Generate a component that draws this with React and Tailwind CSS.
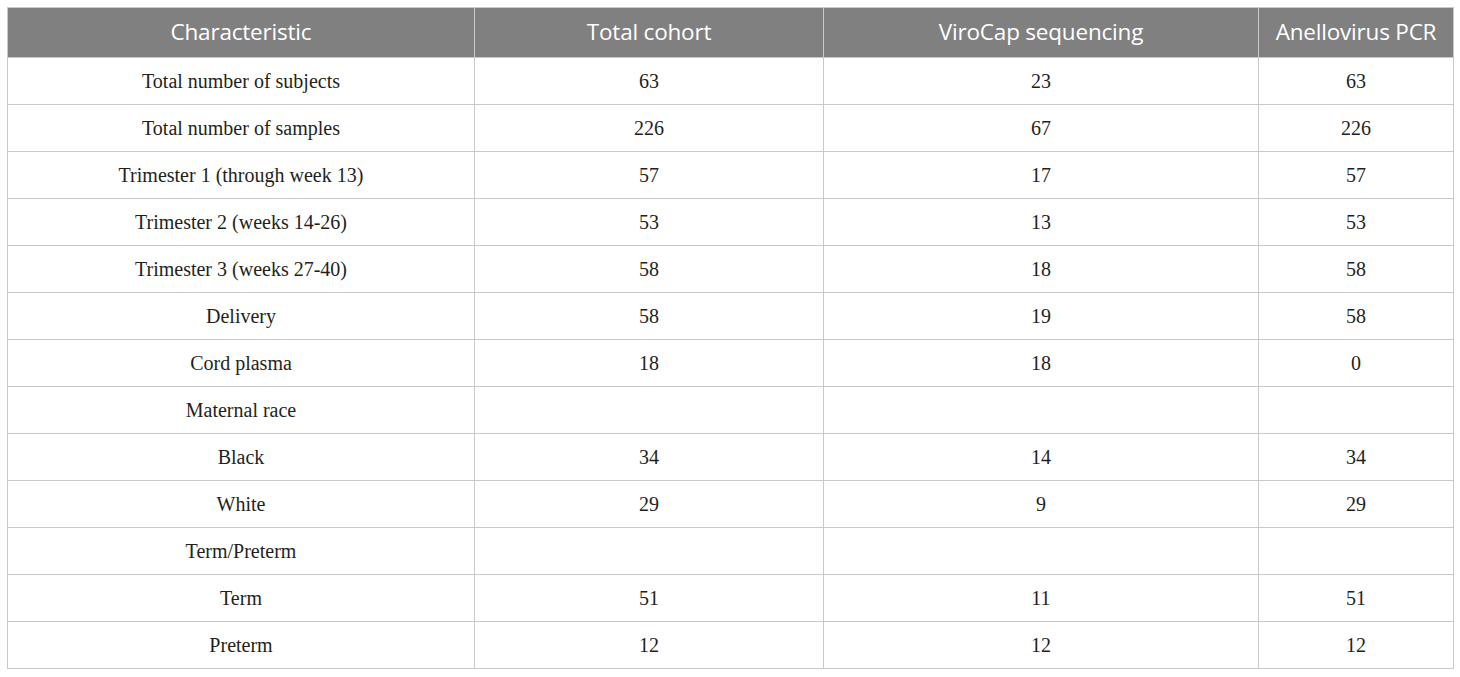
import React from "react";

const rows = [
  ["Total number of subjects", "63", "23", "63"],
  ["Total number of samples", "226", "67", "226"],
  ["Trimester 1 (through week 13)", "57", "17", "57"],
  ["Trimester 2 (weeks 14-26)", "53", "13", "53"],
  ["Trimester 3 (weeks 27-40)", "58", "18", "58"],
  ["Delivery", "58", "19", "58"],
  ["Cord plasma", "18", "18", "0"],
  ["Maternal race", "", "", ""],
  ["Black", "34", "14", "34"],
  ["White", "29", "9", "29"],
  ["Term/Preterm", "", "", ""],
  ["Term", "51", "11", "51"],
  ["Preterm", "12", "12", "12"],
];

const heads = ["Characteristic", "Total cohort", "ViroCap sequencing", "Anellovirus PCR"];

export default function App() {
  return (
    <div className="w-[1460px] h-[677px] bg-white pl-[7px] pt-[7px]">
      <table className="border-collapse table-fixed w-[1447px]">
        <colgroup>
          <col className="w-[467px]" />
          <col className="w-[349px]" />
          <col className="w-[435px]" />
          <col className="w-[195px]" />
        </colgroup>
        <thead>
          <tr className="h-[50px] bg-[#808080]">
            {heads.map((h) => (
              <th
                key={h}
                className="border border-[#c9c9c9] p-0 text-center align-middle font-normal text-white text-[22.5px] leading-none font-['Open_Sans',sans-serif] tracking-[-0.2px]"
              >
                {h}
              </th>
            ))}
          </tr>
        </thead>
        <tbody>
          {rows.map((r, i) => (
            <tr key={i} className="h-[47px]">
              {r.map((c, j) => (
                <td
                  key={j}
                  className="border border-[#c9c9c9] p-0 text-center align-middle text-[#231f20] text-[20px] leading-none font-['Liberation_Serif',serif]"
                >
                  {c}
                </td>
              ))}
            </tr>
          ))}
        </tbody>
      </table>
    </div>
  );
}
